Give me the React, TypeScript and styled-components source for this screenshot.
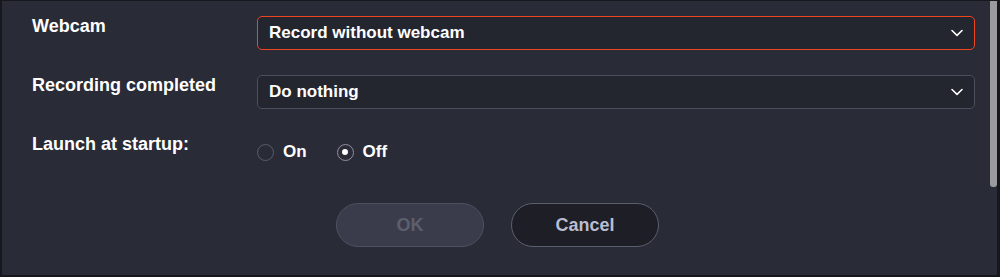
import { useState } from 'react';
import styled, { createGlobalStyle } from 'styled-components';

const GlobalStyle = createGlobalStyle`
    html, body {
        margin: 0;
        padding: 0;
        background: #1b1c22;
    }
`;

const Frame = styled.div`
    box-sizing: border-box;
    width: 1000px;
    height: 277px;
    display: flex;
    background-color: #292b37;
    border-style: solid;
    border-color: #17181d;
    border-width: 1px 3px 2px 2px;
    font-family: 'Liberation Sans', Arial, sans-serif;
    overflow: hidden;
`;

const Content = styled.div`
    flex: 1;
    display: flex;
    flex-direction: column;
    padding: 15px 12px 0 30px;
`;

const Form = styled.div`
    display: grid;
    grid-template-columns: 225px 1fr;
    row-gap: 25px;
`;

const Label = styled.div`
    color: #ffffff;
    font-size: 18px;
    font-weight: 700;
    line-height: 20px;
`;

const Select = styled.div<{ $active?: boolean }>`
    box-sizing: border-box;
    height: 34px;
    display: flex;
    align-items: center;
    justify-content: space-between;
    padding: 0 11px 0 11px;
    background-color: #23252f;
    border: ${({ $active }) => ($active ? '1.5px solid #ef4520' : '1px solid #4b4e5d')};
    border-radius: 5px;
    color: #ffffff;
    font-size: 17px;
    font-weight: 700;
    cursor: pointer;
`;

const Chevron = () => (
    <svg width="12" height="8" viewBox="0 0 12 8" fill="none">
        <path d="M1 1.5L6 6.3L11 1.5" stroke="#ffffff" strokeWidth="1.6" strokeLinecap="round" strokeLinejoin="round" />
    </svg>
);

const Radios = styled.div`
    height: 36px;
    display: flex;
    align-items: center;
    gap: 30px;
`;

const RadioOption = styled.label`
    display: flex;
    align-items: center;
    gap: 9px;
    color: #ffffff;
    font-size: 17px;
    font-weight: 700;
    cursor: pointer;
`;

const RadioDot = styled.span<{ $checked: boolean }>`
    box-sizing: border-box;
    width: 17px;
    height: 17px;
    border-radius: 50%;
    border: 1.5px solid ${({ $checked }) => ($checked ? '#8e91a0' : '#5a5d6b')};
    display: flex;
    align-items: center;
    justify-content: center;

    &::after {
        content: '';
        width: 6px;
        height: 6px;
        border-radius: 50%;
        background-color: #ffffff;
        display: ${({ $checked }) => ($checked ? 'block' : 'none')};
    }
`;

const Buttons = styled.div`
    display: flex;
    justify-content: center;
    gap: 27px;
    margin-top: 33px;
    padding-right: 12px;
`;

const Button = styled.button<{ $variant: 'ok' | 'cancel' }>`
    box-sizing: border-box;
    width: 148px;
    height: 44px;
    border-radius: 22px;
    font-family: inherit;
    font-size: 18px;
    font-weight: 700;
    cursor: pointer;
    background-color: ${({ $variant }) => ($variant === 'ok' ? '#3a3c4b' : '#1d1e26')};
    border: 1px solid ${({ $variant }) => ($variant === 'ok' ? '#4d5060' : '#5b5e6e')};
    color: ${({ $variant }) => ($variant === 'ok' ? '#5c5f6e' : '#b9bdd0')};

    &:disabled {
        cursor: default;
    }
`;

const ScrollTrack = styled.div`
    width: 10px;
    display: flex;
    justify-content: flex-end;
`;

const ScrollThumb = styled.div`
    width: 7px;
    height: 186px;
    background-color: #9b9b9f;
    border-radius: 0 0 3px 3px;
`;

export default function App() {
    const [launch, setLaunch] = useState<'on' | 'off'>('off');

    return (
        <>
            <GlobalStyle />
            <Frame>
                <Content>
                    <Form>
                        <Label>Webcam</Label>
                        <Select $active>
                            <span>Record without webcam</span>
                            <Chevron />
                        </Select>

                        <Label>Recording completed</Label>
                        <Select>
                            <span>Do nothing</span>
                            <Chevron />
                        </Select>

                        <Label>Launch at startup:</Label>
                        <Radios>
                            <RadioOption onClick={() => setLaunch('on')}>
                                <RadioDot $checked={launch === 'on'} />
                                On
                            </RadioOption>
                            <RadioOption onClick={() => setLaunch('off')}>
                                <RadioDot $checked={launch === 'off'} />
                                Off
                            </RadioOption>
                        </Radios>
                    </Form>

                    <Buttons>
                        <Button $variant="ok" disabled>
                            OK
                        </Button>
                        <Button $variant="cancel">Cancel</Button>
                    </Buttons>
                </Content>
                <ScrollTrack>
                    <ScrollThumb />
                </ScrollTrack>
            </Frame>
        </>
    );
}
